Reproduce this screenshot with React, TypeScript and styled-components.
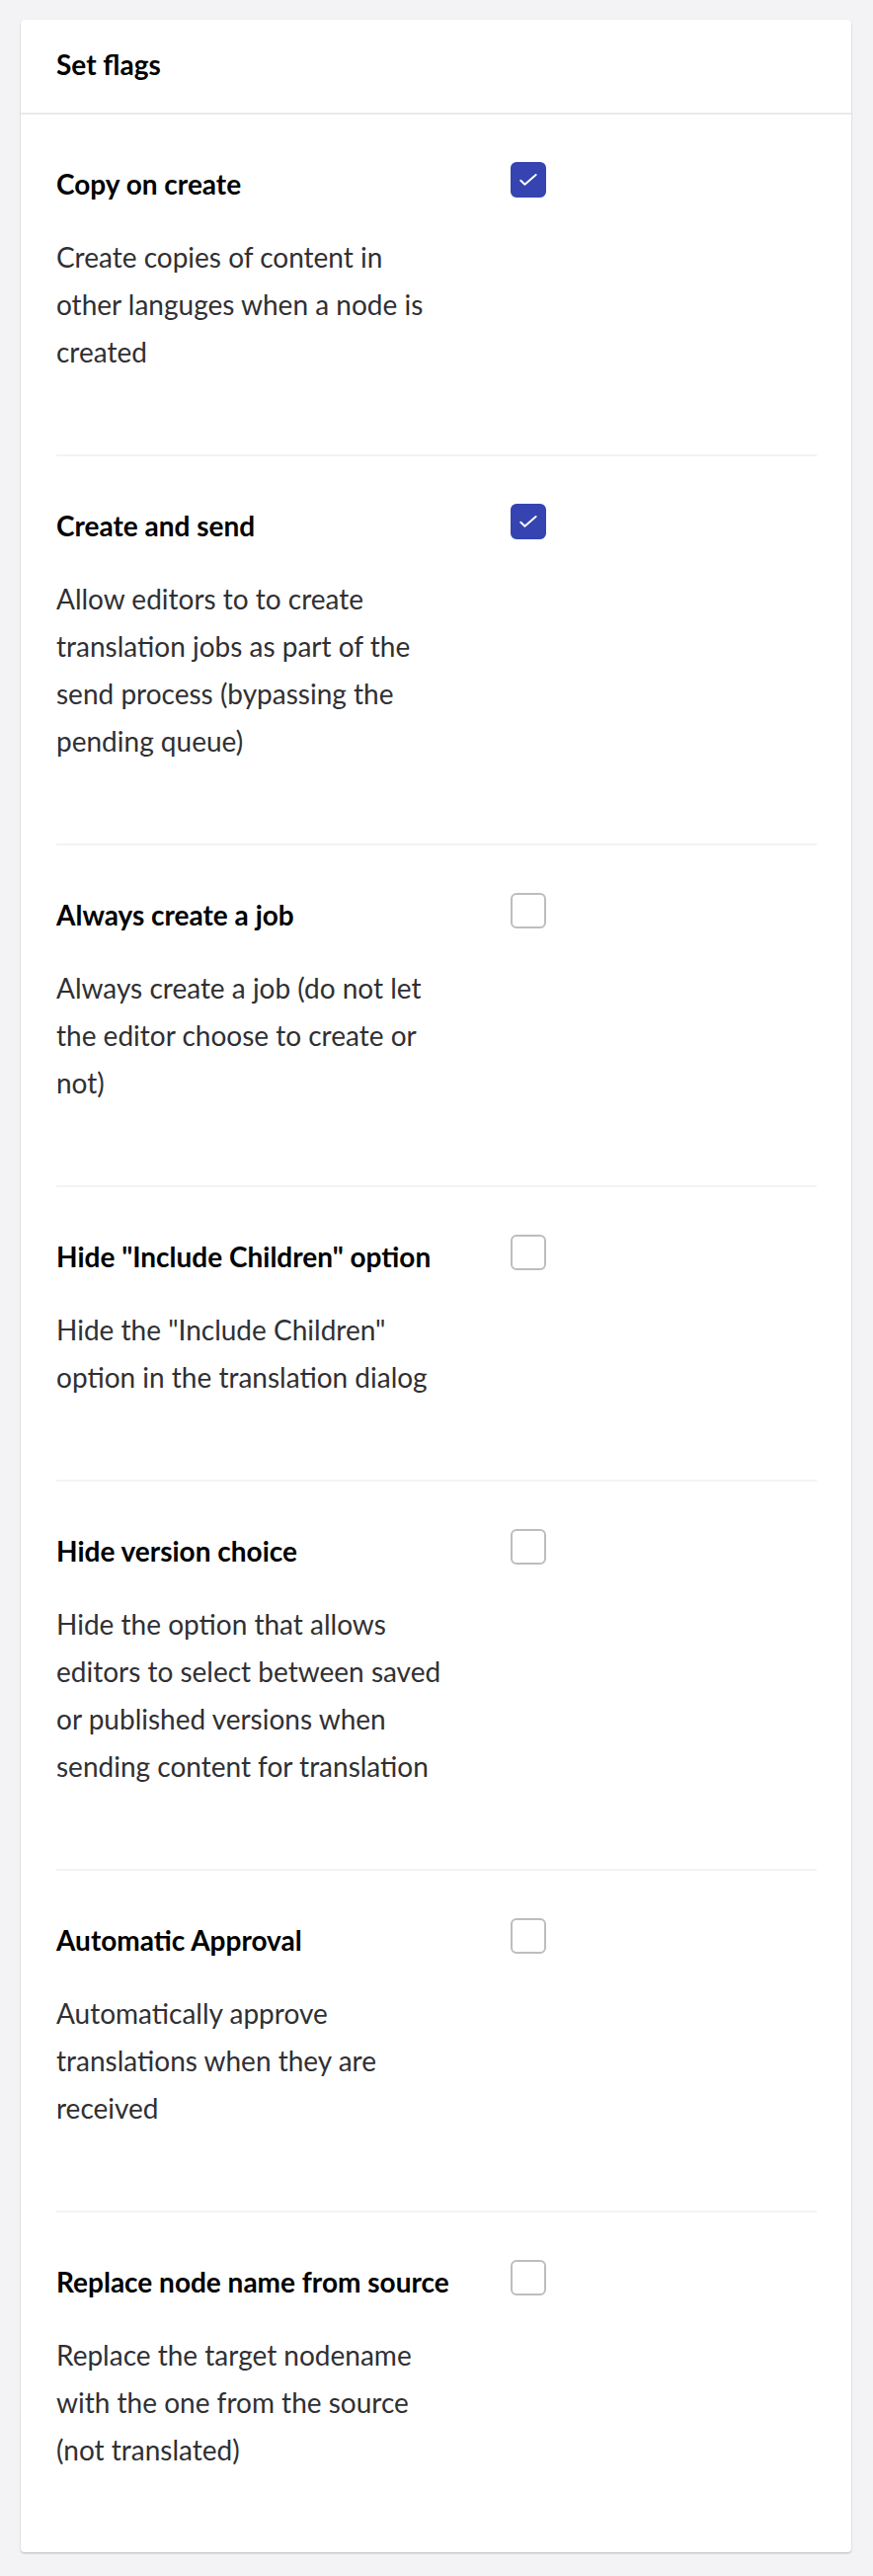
import React from "react";
import styled, { createGlobalStyle } from "styled-components";

const GlobalStyle = createGlobalStyle`
  body {
    margin: 0;
    background: #f3f3f5;
    font-family: Lato, "Open Sans", "Liberation Sans", sans-serif;
  }
`;

const Page = styled.div`
  padding: 20px 22px 22px 21px;
`;

const Card = styled.div`
  background: #fff;
  border-radius: 4px;
  box-shadow: 0 1px 2px rgba(0, 0, 0, 0.25);
`;

const CardHeader = styled.div`
  display: flex;
  align-items: center;
  height: 96px;
  padding: 0 36px 5px;
  box-sizing: border-box;
  border-bottom: 2px solid #e9e9eb;
  font-size: 28px;
  font-weight: 700;
  line-height: 48px;
  color: #000;
`;

const CardBody = styled.div`
  padding: 0 35px 0 36px;
`;

const FlagItem = styled.div`
  padding: 48px 0 80px;
  border-bottom: 2px solid #f3f3f4;

  &:last-child {
    border-bottom: none;
  }
`;

const FlagRow = styled.div`
  display: flex;
  align-items: flex-start;
`;

const FlagTitle = styled.div`
  flex: 0 0 460px;
  font-size: 28px;
  font-weight: 700;
  line-height: 45px;
  color: #000;
`;

const FlagDescription = styled.p`
  margin: 27px 0 0;
  max-width: 395px;
  font-size: 28px;
  line-height: 48px;
  color: #303033;
`;

const CheckBox = styled.span<{ $checked?: boolean }>`
  display: flex;
  align-items: center;
  justify-content: center;
  box-sizing: border-box;
  width: 36px;
  height: 36px;
  border-radius: 6px;
  border: 2px solid ${(p) => (p.$checked ? "#3544b1" : "#bdbdbd")};
  background: ${(p) => (p.$checked ? "#3544b1" : "#fff")};
  cursor: pointer;
`;

const flags = [
  {
    title: "Copy on create",
    description:
      "Create copies of content in other languges when a node is created",
    checked: true,
  },
  {
    title: "Create and send",
    description:
      "Allow editors to to create translation jobs as part of the send process (bypassing the pending queue)",
    checked: true,
  },
  {
    title: "Always create a job",
    description:
      "Always create a job (do not let the editor choose to create or not)",
    checked: false,
  },
  {
    title: 'Hide "Include Children" option',
    description: 'Hide the "Include Children" option in the translation dialog',
    checked: false,
  },
  {
    title: "Hide version choice",
    description:
      "Hide the option that allows editors to select between saved or published versions when sending content for translation",
    checked: false,
  },
  {
    title: "Automatic Approval",
    description: "Automatically approve translations when they are received",
    checked: false,
  },
  {
    title: "Replace node name from source",
    description:
      "Replace the target nodename with the one from the source (not translated)",
    checked: false,
  },
];

export default function App() {
  return (
    <Page>
      <GlobalStyle />
      <Card>
        <CardHeader>Set flags</CardHeader>
        <CardBody>
          {flags.map((flag) => (
            <FlagItem key={flag.title}>
              <FlagRow>
                <FlagTitle>{flag.title}</FlagTitle>
                <CheckBox $checked={flag.checked}>
                  {flag.checked && (
                    <svg width="36" height="36" viewBox="0 0 36 36" fill="none">
                      <path
                        d="M9.3 18.8l4.7 4.5L26.6 12.3"
                        stroke="#fff"
                        strokeWidth="2.2"
                        strokeLinecap="round"
                        strokeLinejoin="round"
                      />
                    </svg>
                  )}
                </CheckBox>
              </FlagRow>
              <FlagDescription>{flag.description}</FlagDescription>
            </FlagItem>
          ))}
        </CardBody>
      </Card>
    </Page>
  );
}
